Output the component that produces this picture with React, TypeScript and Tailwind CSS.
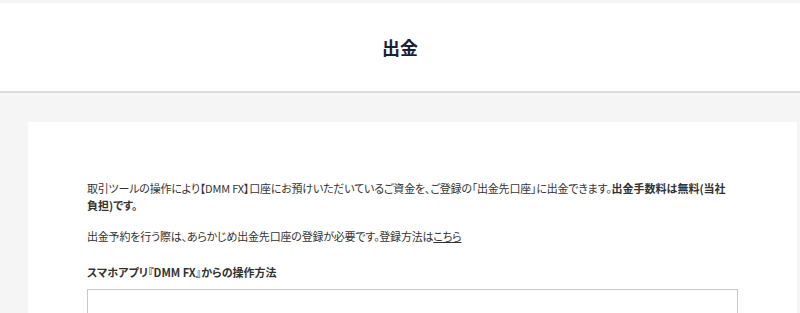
export default function App() {
  return (
    <div className="min-h-[313px] bg-[#f5f5f5] pt-[3px] font-['Noto_Sans_CJK_JP','Noto_Sans',sans-serif] text-[#333] [font-feature-settings:'palt']">
      <header className="flex h-[90px] items-center justify-center border-b-2 border-[#dcdcdc] bg-white">
        <h1 className="text-[18px] font-bold text-[#1b2135]">出金</h1>
      </header>
      <main className="ml-[28px] mr-[3px] mt-[29px] bg-white px-[59px] pt-[58px] pb-10">
        <p className="text-[11px] leading-[17px] tracking-[-0.2px]">
          取引ツールの操作により【DMM FX】口座にお預けいただいているご資金を、ご登録の「出金先口座」に出金できます。
          <span className="font-bold tracking-normal">
            出金手数料は無料(当社
            <br />
            負担)です。
          </span>
        </p>
        <p className="mt-[14px] text-[11px] leading-[17px] tracking-[-0.2px]">
          出金予約を行う際は、あらかじめ出金先口座の登録が必要です。登録方法は
          <a href="#" className="underline">
            こちら
          </a>
        </p>
        <h2 className="mt-[19px] text-[11px] font-bold leading-[17px]">
          スマホアプリ『DMM FX』からの操作方法
        </h2>
        <div className="mt-[8px] h-[120px] border border-[#c8c8c8]"></div>
      </main>
    </div>
  );
}
